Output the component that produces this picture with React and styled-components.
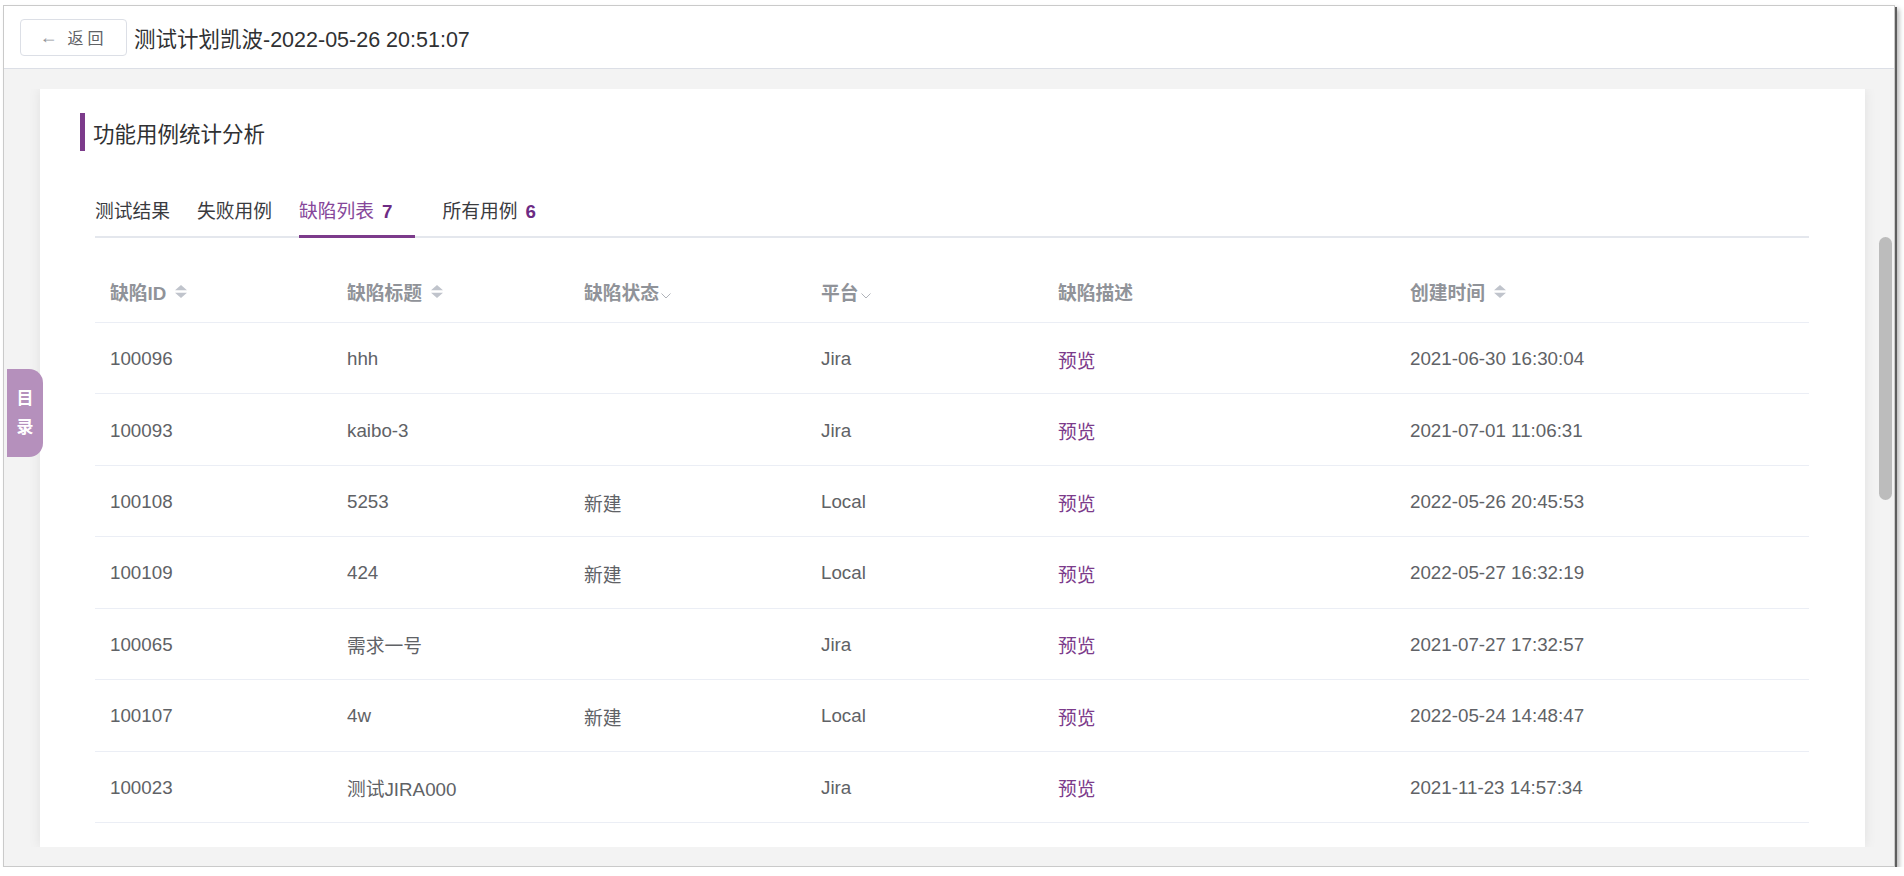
import styled, { createGlobalStyle } from "styled-components";

const PURPLE = "#7c3b8b";
const CJK = `"Liberation Sans", Arial, "Noto Sans CJK SC", sans-serif`;

const GlobalStyle = createGlobalStyle`
  html, body {
    margin: 0;
    padding: 0;
    background: #fff;
  }
  body {
    font-family: ${CJK};
  }
  * {
    box-sizing: border-box;
  }
`;

const Window = styled.div`
  margin: 5px 0 0 3px;
  width: 1892px;
  height: 862px;
  border: 1px solid #cacaca;
  box-shadow: 2px 2px 0 #5e5e5e, 4px 4px 5px rgba(0, 0, 0, 0.3);
  display: flex;
  flex-direction: column;
  overflow: hidden;
`;

const Header = styled.header`
  flex: none;
  height: 63px;
  background: #fff;
  border-bottom: 1px solid #dcdfe6;
  display: flex;
  align-items: center;
  padding-left: 16px;
  gap: 7px;
`;

const BackButton = styled.button`
  width: 107px;
  height: 37px;
  border: 1px solid #dcdfe6;
  border-radius: 4px;
  background: #fff;
  color: #606266;
  font-family: ${CJK};
  font-size: 16px;
  display: flex;
  align-items: center;
  justify-content: center;
  gap: 10px;
  padding: 0;
  letter-spacing: 4px;

  > .arrow {
    font-size: 18px;
    color: #909399;
    letter-spacing: 0;
  }
`;

const PageTitle = styled.h1`
  margin: 0;
  font-size: 21.5px;
  font-weight: 400;
  color: #303133;
`;

const Body = styled.div`
  flex: 1;
  min-height: 0;
  background: #f3f3f3;
  padding: 20px 0 19px;
  position: relative;
  display: flex;
`;

const Viewport = styled.div`
  flex: 1;
  display: flex;
  overflow: hidden;
  padding: 0 2px 0 36px;
`;

const Card = styled.div`
  flex: 1;
  background: #fff;
  box-shadow: 0 0 12px rgba(0, 0, 0, 0.08);
  padding: 24px 41px 0 40px;
`;

const Track = styled.div`
  flex: none;
  width: 13px;
  margin-left: 14px;
  padding-top: 148px;
`;

const Thumb = styled.div`
  height: 263px;
  border-radius: 7px;
  background: #bcbcbc;
`;

const SideTab = styled.div`
  position: absolute;
  left: 3px;
  top: 300px;
  width: 36px;
  height: 88px;
  background: #b590bc;
  border-radius: 0 14px 14px 0;
  color: #fff;
  font-size: 17px;
  font-weight: 700;
  line-height: 29px;
  display: flex;
  flex-direction: column;
  align-items: center;
  justify-content: center;
`;

const SectionTitle = styled.h2`
  margin: 0;
  height: 38px;
  border-left: 5px solid ${PURPLE};
  padding-left: 8px;
  display: flex;
  align-items: center;
  font-size: 21.5px;
  font-weight: 400;
  color: #303133;
`;

const Section = styled.div`
  margin: 0 15px;
`;

const TabBar = styled.div`
  margin-top: 37px;
  height: 50px;
  display: flex;
  gap: 27px;
  border-bottom: 2px solid #e4e7ed;
`;

const Tab = styled.div`
  height: 50px;
  margin-bottom: -2px;
  line-height: 47px;
  font-size: 18.75px;
  color: ${(p) => (p.$active ? "#86479a" : "#3a3b3f")};
  border-bottom: 3px solid ${(p) => (p.$active ? PURPLE : "transparent")};
  padding-right: ${(p) => (p.$padded ? "23px" : "0")};
  white-space: nowrap;

  > b {
    margin-left: 8px;
    color: #6d2b84;
    font-weight: 700;
  }
`;

const Table = styled.div`
  margin-top: 22px;
`;

const Row = styled.div`
  display: grid;
  grid-template-columns: 237px 237px 237px 237px 352px 1fr;
  height: ${(p) => (p.$head ? "63px" : "71.43px")};
  align-items: center;
  border-bottom: 1px solid #ebeef5;
`;

const HeadCell = styled.div`
  padding-left: 15px;
  display: flex;
  align-items: center;
  gap: ${(p) => (p.$tight ? "2px" : "9px")};
  font-size: 18.75px;
  font-weight: 700;
  color: #909399;
  white-space: nowrap;
`;

const Cell = styled.div`
  padding-left: 15px;
  padding-top: 2px;
  font-size: 18.75px;
  color: #606266;
  white-space: nowrap;
`;

const Link = styled.a`
  color: ${PURPLE};
  text-decoration: none;
  cursor: pointer;
`;

const SortIcon = () => (
  <svg width="12" height="13" viewBox="0 0 12 13">
    <path d="M6 0 L12 5.3 H0 Z" fill="#c0c4cc" />
    <path d="M6 13 L12 7.7 H0 Z" fill="#c0c4cc" />
  </svg>
);

const FilterIcon = () => (
  <svg width="10" height="6" viewBox="0 0 10 6" style={{ marginTop: 10 }}>
    <path d="M0.5 0.5 L5 5 L9.5 0.5" fill="none" stroke="#b0b3b9" strokeWidth="1" />
  </svg>
);

const columns = [
  { title: "缺陷ID", icon: "sort" },
  { title: "缺陷标题", icon: "sort" },
  { title: "缺陷状态", icon: "filter" },
  { title: "平台", icon: "filter" },
  { title: "缺陷描述" },
  { title: "创建时间", icon: "sort" },
];

const rows = [
  ["100096", "hhh", "", "Jira", "2021-06-30 16:30:04"],
  ["100093", "kaibo-3", "", "Jira", "2021-07-01 11:06:31"],
  ["100108", "5253", "新建", "Local", "2022-05-26 20:45:53"],
  ["100109", "424", "新建", "Local", "2022-05-27 16:32:19"],
  ["100065", "需求一号", "", "Jira", "2021-07-27 17:32:57"],
  ["100107", "4w", "新建", "Local", "2022-05-24 14:48:47"],
  ["100023", "测试JIRA000", "", "Jira", "2021-11-23 14:57:34"],
];

const tabs = [
  { label: "测试结果" },
  { label: "失败用例" },
  { label: "缺陷列表", count: 7, active: true },
  { label: "所有用例", count: 6 },
];

const App = () => {
  return (
    <>
      <GlobalStyle />
      <Window>
        <Header>
          <BackButton>
            <span className="arrow">←</span>
            <span>返回</span>
          </BackButton>
          <PageTitle>测试计划凯波-2022-05-26 20:51:07</PageTitle>
        </Header>
        <Body>
          <Viewport>
            <Card>
              <SectionTitle>功能用例统计分析</SectionTitle>
              <Section>
                <TabBar>
                  {tabs.map((t) => (
                    <Tab key={t.label} $active={t.active} $padded={t.count != null}>
                      {t.label}
                      {t.count != null && <b>{t.count}</b>}
                    </Tab>
                  ))}
                </TabBar>
                <Table>
                  <Row $head>
                    {columns.map((c) => (
                      <HeadCell key={c.title} $tight={c.icon === "filter"}>
                        {c.title}
                        {c.icon === "sort" && <SortIcon />}
                        {c.icon === "filter" && <FilterIcon />}
                      </HeadCell>
                    ))}
                  </Row>
                  {rows.map((r) => (
                    <Row key={r[0]}>
                      <Cell>{r[0]}</Cell>
                      <Cell>{r[1]}</Cell>
                      <Cell>{r[2]}</Cell>
                      <Cell>{r[3]}</Cell>
                      <Cell>
                        <Link>预览</Link>
                      </Cell>
                      <Cell>{r[4]}</Cell>
                    </Row>
                  ))}
                </Table>
              </Section>
            </Card>
            <Track>
              <Thumb />
            </Track>
          </Viewport>
          <SideTab>
            <span>目</span>
            <span>录</span>
          </SideTab>
        </Body>
      </Window>
    </>
  );
};

export default App;
